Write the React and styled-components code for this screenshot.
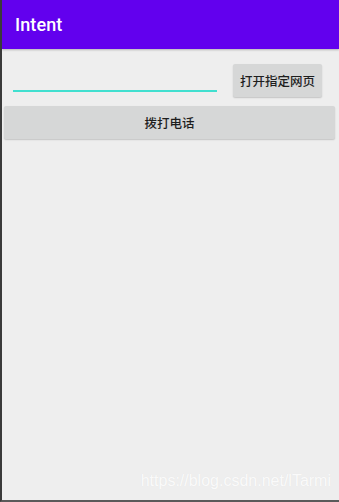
import React from "react";
import styled, { createGlobalStyle } from "styled-components";

const GlobalStyle = createGlobalStyle`
  html, body {
    margin: 0;
    padding: 0;
    background: #eeeeee;
    overflow: hidden;
  }
  #root {
    height: 502px;
  }
`;

const Screen = styled.div`
  position: relative;
  width: 100%;
  height: 502px;
  box-sizing: border-box;
  background: #eeeeee;
  border-left: 2px solid #3a3a3a;
  border-bottom: 2px solid #5a5a5a;
  display: flex;
  flex-direction: column;
  font-family: Roboto, "Noto Sans CJK SC", sans-serif;
  overflow: hidden;
`;

const AppBar = styled.div`
  height: 49px;
  background: #6200ee;
  display: flex;
  align-items: center;
  padding-left: 13px;
  box-shadow: 0 1px 2px rgba(0, 0, 0, 0.25);
  flex-shrink: 0;
`;

const Title = styled.h1`
  margin: 0;
  color: #ffffff;
  font-size: 18px;
  font-weight: 500;
  letter-spacing: 0.1px;
`;

const Content = styled.div`
  display: flex;
  flex-direction: column;
  padding: 15px 4px 0 2px;
  gap: 9px;
`;

const Row = styled.div`
  display: flex;
  align-items: flex-start;
  height: 33px;
  padding: 0 13px 0 9px;
  gap: 16px;
`;

const Field = styled.input`
  flex: 1;
  min-width: 0;
  height: 28px;
  box-sizing: border-box;
  padding: 0 4px;
  border: 0;
  border-bottom: 2px solid #40dfcf;
  background: transparent;
  outline: 0;
  font-size: 15px;
`;

const Button = styled.button`
  display: flex;
  align-items: center;
  justify-content: center;
  height: 33px;
  width: ${({ wide }) => (wide ? "auto" : "89px")};
  padding: 0;
  border: 0;
  border-radius: 2px;
  background: #d6d7d7;
  box-shadow: 0 1px 1.5px rgba(0, 0, 0, 0.18);
  color: #1e1e1e;
  font-family: "Noto Sans CJK SC", sans-serif;
  font-size: 12.5px;
  font-weight: 500;
  flex-shrink: 0;
`;

const Watermark = styled.div`
  position: absolute;
  right: 8px;
  bottom: 10px;
  color: rgba(255, 255, 255, 0.85);
  font-family: "Liberation Sans", Arial, sans-serif;
  font-size: 16px;
  text-shadow: 0 0 1px rgba(0, 0, 0, 0.06);
`;

export default function App() {
  return (
    <>
      <GlobalStyle />
      <Screen>
        <AppBar>
          <Title>Intent</Title>
        </AppBar>
        <Content>
          <Row>
            <Field />
            <Button>打开指定网页</Button>
          </Row>
          <Button wide>拨打电话</Button>
        </Content>
        <Watermark>https://blog.csdn.net/lTarmi</Watermark>
      </Screen>
    </>
  );
}
